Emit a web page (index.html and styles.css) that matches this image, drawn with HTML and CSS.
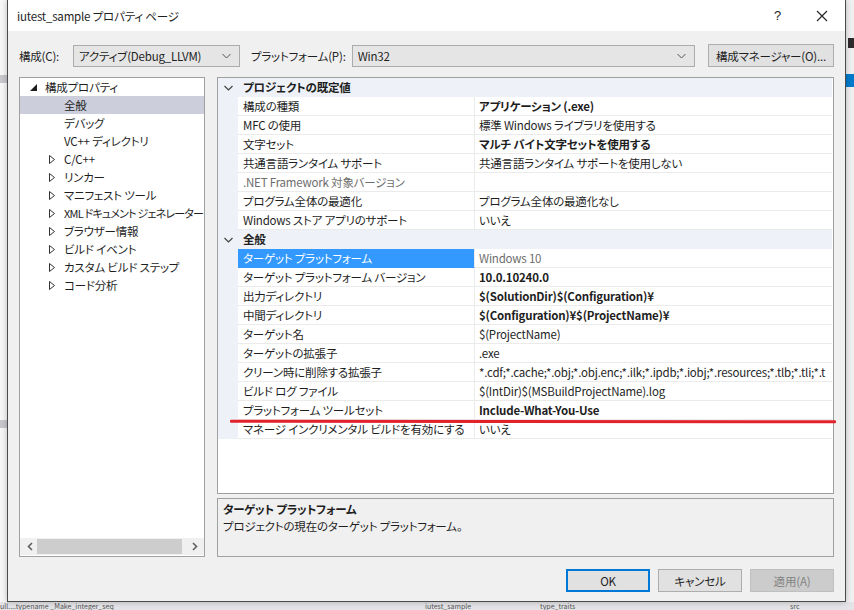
FILE: index.html
```html
<!DOCTYPE html>
<html lang="ja">
  <head>
    <meta charset="UTF-8" />
    <title>iutest_sample プロパティ ページ</title>
    <link rel="stylesheet" href="styles.css">
  </head>
  <body>
    <div class="desk">
      <div class="dialog">
        <div class="titlebar">
          <span class="title">iutest_sample プロパティ ページ</span>
          <span class="help">?</span>
          <svg class="close" width="12" height="12" viewBox="0 0 12 12">
            <path d="M1 1 L11 11 M11 1 L1 11" stroke="#222" stroke-width="1.1" fill="none" />
          </svg>
        </div>

        <div class="content">
          <div class="config-row">
            <label class="lbl lbl-conf">構成(C):</label>
            <div class="combo combo-conf">
              <span>アクティブ(Debug_LLVM)</span>
              <svg width="9" height="6" viewBox="0 0 9 6"><path d="M0.5 1 L4.5 5 L8.5 1" stroke="#555" fill="none" /></svg>
            </div>
            <label class="lbl lbl-plat">プラットフォーム(P):</label>
            <div class="combo combo-plat">
              <span>Win32</span>
              <svg width="9" height="6" viewBox="0 0 9 6"><path d="M0.5 1 L4.5 5 L8.5 1" stroke="#555" fill="none" /></svg>
            </div>
            <button class="btn btn-manager">構成マネージャー(O)...</button>
          </div>

          <div class="main">
            <div class="tree">
              <ul class="tree-list">
                <li class="root"><span class="tw"><svg width="7" height="7" viewBox="0 0 7 7"><polygon points="7,0 7,7 0,7" fill="#1e1e1e" /></svg></span>構成プロパティ</li>
                <li class="leaf sel">全般</li>
                <li class="leaf">デバッグ</li>
                <li class="leaf">VC++ ディレクトリ</li>
                <li class="child"><span class="tw"><svg width="6" height="9" viewBox="0 0 6 9"><polygon points="0.5,0.5 5.5,4.5 0.5,8.5" fill="none" stroke="#333" /></svg></span>C/C++</li>
                <li class="child"><span class="tw"><svg width="6" height="9" viewBox="0 0 6 9"><polygon points="0.5,0.5 5.5,4.5 0.5,8.5" fill="none" stroke="#333" /></svg></span>リンカー</li>
                <li class="child"><span class="tw"><svg width="6" height="9" viewBox="0 0 6 9"><polygon points="0.5,0.5 5.5,4.5 0.5,8.5" fill="none" stroke="#333" /></svg></span>マニフェスト ツール</li>
                <li class="child narrow"><span class="tw"><svg width="6" height="9" viewBox="0 0 6 9"><polygon points="0.5,0.5 5.5,4.5 0.5,8.5" fill="none" stroke="#333" /></svg></span>XML ドキュメント ジェネレーター</li>
                <li class="child"><span class="tw"><svg width="6" height="9" viewBox="0 0 6 9"><polygon points="0.5,0.5 5.5,4.5 0.5,8.5" fill="none" stroke="#333" /></svg></span>ブラウザー情報</li>
                <li class="child"><span class="tw"><svg width="6" height="9" viewBox="0 0 6 9"><polygon points="0.5,0.5 5.5,4.5 0.5,8.5" fill="none" stroke="#333" /></svg></span>ビルド イベント</li>
                <li class="child"><span class="tw"><svg width="6" height="9" viewBox="0 0 6 9"><polygon points="0.5,0.5 5.5,4.5 0.5,8.5" fill="none" stroke="#333" /></svg></span>カスタム ビルド ステップ</li>
                <li class="child"><span class="tw"><svg width="6" height="9" viewBox="0 0 6 9"><polygon points="0.5,0.5 5.5,4.5 0.5,8.5" fill="none" stroke="#333" /></svg></span>コード分析</li>
              </ul>
              <div class="hscroll">
                <svg class="arr" width="6" height="9" viewBox="0 0 6 9"><path d="M5 1 L1.5 4.5 L5 8" stroke="#606060" stroke-width="1.6" fill="none" /></svg>
                <div class="thumb"></div>
                <svg class="arr" width="6" height="9" viewBox="0 0 6 9"><path d="M1 1 L4.5 4.5 L1 8" stroke="#606060" stroke-width="1.6" fill="none" /></svg>
              </div>
            </div>

            <div class="right">
              <div class="grid">
                <div class="cat">
                  <span class="gut"><svg width="9" height="6" viewBox="0 0 9 6"><path d="M0.5 1 L4.5 5 L8.5 1" stroke="#444" stroke-width="1.2" fill="none" /></svg></span>
                  <span class="cat-name">プロジェクトの既定値</span>
                </div>
                <div class="prop"><span class="gut"></span><span class="name">構成の種類</span><span class="val b">アプリケーション (.exe)</span></div>
                <div class="prop"><span class="gut"></span><span class="name">MFC の使用</span><span class="val">標準 Windows ライブラリを使用する</span></div>
                <div class="prop"><span class="gut"></span><span class="name">文字セット</span><span class="val b">マルチ バイト文字セットを使用する</span></div>
                <div class="prop"><span class="gut"></span><span class="name">共通言語ランタイム サポート</span><span class="val">共通言語ランタイム サポートを使用しない</span></div>
                <div class="prop"><span class="gut"></span><span class="name off">.NET Framework 対象バージョン</span><span class="val"></span></div>
                <div class="prop"><span class="gut"></span><span class="name">プログラム全体の最適化</span><span class="val">プログラム全体の最適化なし</span></div>
                <div class="prop"><span class="gut"></span><span class="name">Windows ストア アプリのサポート</span><span class="val">いいえ</span></div>
                <div class="cat">
                  <span class="gut"><svg width="9" height="6" viewBox="0 0 9 6"><path d="M0.5 1 L4.5 5 L8.5 1" stroke="#444" stroke-width="1.2" fill="none" /></svg></span>
                  <span class="cat-name">全般</span>
                </div>
                <div class="prop"><span class="gut"></span><span class="name sel">ターゲット プラットフォーム</span><span class="val off">Windows 10</span></div>
                <div class="prop"><span class="gut"></span><span class="name">ターゲット プラットフォーム バージョン</span><span class="val b">10.0.10240.0</span></div>
                <div class="prop"><span class="gut"></span><span class="name">出力ディレクトリ</span><span class="val b">$(SolutionDir)$(Configuration)¥</span></div>
                <div class="prop"><span class="gut"></span><span class="name">中間ディレクトリ</span><span class="val b">$(Configuration)¥$(ProjectName)¥</span></div>
                <div class="prop"><span class="gut"></span><span class="name">ターゲット名</span><span class="val">$(ProjectName)</span></div>
                <div class="prop"><span class="gut"></span><span class="name">ターゲットの拡張子</span><span class="val">.exe</span></div>
                <div class="prop"><span class="gut"></span><span class="name">クリーン時に削除する拡張子</span><span class="val">*.cdf;*.cache;*.obj;*.obj.enc;*.ilk;*.ipdb;*.iobj;*.resources;*.tlb;*.tli;*.t</span></div>
                <div class="prop"><span class="gut"></span><span class="name">ビルド ログ ファイル</span><span class="val">$(IntDir)$(MSBuildProjectName).log</span></div>
                <div class="prop"><span class="gut"></span><span class="name">プラットフォーム ツールセット</span><span class="val b">Include-What-You-Use</span></div>
                <div class="prop"><span class="gut"></span><span class="name">マネージ インクリメンタル ビルドを有効にする</span><span class="val">いいえ</span></div>
              </div>
              <div class="desc">
                <div class="desc-title">ターゲット プラットフォーム</div>
                <div>プロジェクトの現在のターゲット プラットフォーム。</div>
              </div>
            </div>
          </div>

          <div class="footer">
            <button class="btn btn-ok">OK</button>
            <button class="btn">キャンセル</button>
            <button class="btn" disabled>適用(A)</button>
          </div>
        </div>
      </div>
      <div class="redline"></div>
      <div class="ide-status">
        <span class="s1">ull....typename _Make_integer_seq</span>
        <span class="s2">iutest_sample</span>
        <span class="s3">type_traits</span>
        <span class="s4">src</span>
      </div>
    </div>
  </body>
</html>
```

FILE: styles.css
```css
body {
  margin: 0;
  font-family: "Noto Sans CJK JP", "Noto Sans", sans-serif;
  font-size: 11.5px;
  letter-spacing: -0.2px;
  font-feature-settings: "palt";
  color: #1e1e1e;
  background: #f2f2f4;
}

.desk {
  position: relative;
  width: 854px;
  height: 610px;
  overflow: hidden;
  background:
    linear-gradient(#2d2d30, #2d2d30) 848px 38px / 6px 10px no-repeat,
    linear-gradient(#007acc, #007acc) 846px 74px / 8px 13px no-repeat,
    linear-gradient(#c8c8cc, #c8c8cc) 0 75px / 7px 8px no-repeat,
    linear-gradient(#c8c8cc, #c8c8cc) 0 420px / 7px 8px no-repeat,
    linear-gradient(90deg, #f7f7f7 0, #f7f7f7 846px, #f0f0f2 846px);
}

.dialog {
  margin-left: 7px;
  width: 839px;
  height: 602px;
  box-sizing: border-box;
  border: 1px solid #4b4b4b;
  border-top: 0;
  display: flex;
  flex-direction: column;
  box-shadow: 0 0 6px rgba(0, 0, 0, 0.25);
  position: relative;
  z-index: 1;
}

.titlebar {
  height: 31px;
  background: #fff;
  display: flex;
  align-items: center;
  padding-left: 9px;
  flex-shrink: 0;
}

.title {
  flex: 1;
  line-height: 16px;
}

.help {
  font-family: "Liberation Sans", sans-serif;
  font-size: 13px;
  margin-right: 35px;
}

.close {
  margin-right: 17px;
}

.content {
  flex: 1;
  background: #f0f0f0;
  padding: 13px 11px 0 11px;
}

.config-row {
  display: flex;
  align-items: center;
  height: 23px;
}

.lbl {
  line-height: 16px;
  white-space: nowrap;
  flex-shrink: 0;
}

.lbl-conf {
  width: 54px;
}

.lbl-plat {
  margin-left: 11px;
  margin-right: 6px;
}

.combo {
  height: 22px;
  box-sizing: border-box;
  border: 1px solid #acacac;
  background: #e5e5e5;
  display: flex;
  align-items: center;
  justify-content: space-between;
  padding: 0 8px 0 5px;
  line-height: 16px;
}

.combo-conf {
  width: 167px;
  flex-shrink: 0;
}

.combo-plat {
  flex: 1;
}

.btn {
  font-family: inherit;
  font-size: 11.5px;
  letter-spacing: -0.2px;
  font-feature-settings: "palt";
  color: #1e1e1e;
  background: #e1e1e1;
  border: 1px solid #adadad;
  height: 23px;
  padding: 0;
  line-height: 16px;
}

.btn-manager {
  margin-left: 13px;
  width: 126px;
  flex-shrink: 0;
}

.main {
  display: flex;
  gap: 12px;
  margin-top: 10px;
  height: 480px;
}

.tree {
  width: 186px;
  flex-shrink: 0;
  box-sizing: border-box;
  border: 1px solid #a0a0a0;
  background: #fff;
  display: flex;
  flex-direction: column;
}

.tree-list {
  list-style: none;
  margin: 0;
  padding: 0;
  flex: 1;
}

.tree-list li {
  height: 18px;
  line-height: 18px;
  display: flex;
  align-items: center;
  white-space: nowrap;
  overflow: hidden;
}

.tree-list .narrow {
  font-size: 11px;
  letter-spacing: -0.8px;
}

.tw {
  width: 16px;
  margin-right: 4px;
  display: inline-flex;
  justify-content: center;
  align-items: center;
  flex-shrink: 0;
}

.tree-list .root {
  padding-left: 5px;
}

.tree-list .child {
  padding-left: 24px;
}

.tree-list .leaf {
  padding-left: 44px;
}

.tree-list .sel {
  background: #cccedb;
}

.hscroll {
  height: 17px;
  background: #f0f0f0;
  display: flex;
  align-items: center;
  padding: 0 6px 0 7px;
  margin-bottom: 1px;
}

.thumb {
  flex: 1;
  height: 15px;
  background: #cdcdcd;
  margin: 0 10px 0 4px;
}

.right {
  flex: 1;
  min-width: 0;
  display: flex;
  flex-direction: column;
  gap: 4px;
}

.grid {
  height: 417px;
  box-sizing: border-box;
  border: 1px solid #a0a0a0;
  background: #fff;
  overflow: hidden;
}

.cat,
.prop {
  display: flex;
  height: 19px;
  line-height: 18px;
  margin-right: 1px;
}

.cat {
  background: #eef2f8;
  font-weight: bold;
}

.gut {
  width: 20px;
  flex-shrink: 0;
  background: #eef2f8;
  display: flex;
  align-items: center;
  justify-content: center;
}

.cat-name {
  padding-left: 5px;
}

.name {
  width: 237px;
  flex-shrink: 0;
  box-sizing: border-box;
  padding-left: 5px;
  border-bottom: 1px solid #ebebeb;
  border-right: 1px solid #ebebeb;
  white-space: nowrap;
  overflow: hidden;
}

.name.sel {
  background: #3399ff;
  color: #fff;
  border-bottom-color: #3399ff;
}

.val {
  flex: 1;
  min-width: 0;
  padding-left: 4px;
  border-bottom: 1px solid #ebebeb;
  white-space: nowrap;
  overflow: hidden;
}

.b {
  font-weight: bold;
}

.off {
  color: #6d6d6d;
}

.desc {
  height: 59px;
  box-sizing: border-box;
  border: 1px solid #a0a0a0;
  padding: 2px 5px;
  line-height: 17px;
}

.desc-title {
  font-weight: bold;
}

.footer {
  display: flex;
  justify-content: flex-end;
  gap: 8px;
  margin-top: 12px;
}

.footer .btn {
  width: 84px;
}

.btn-ok {
  border: 2px solid #0078d7;
}

.btn:disabled {
  background: #cccccc;
  border-color: #bfbfbf;
  color: #838383;
}

.redline {
  position: absolute;
  left: 230px;
  top: 420px;
  width: 606px;
  height: 3px;
  background: #e3212b;
  border-radius: 1px;
  transform: rotate(0.05deg);
  z-index: 2;
}

.ide-status {
  height: 8px;
  background: #e4e4e8;
  overflow: hidden;
  color: #555;
  font-size: 7px;
  line-height: 8px;
  letter-spacing: 0;
  display: flex;
}

.s1 {
  width: 425px;
}

.s2 {
  width: 115px;
}

.s3 {
  width: 250px;
}
```
